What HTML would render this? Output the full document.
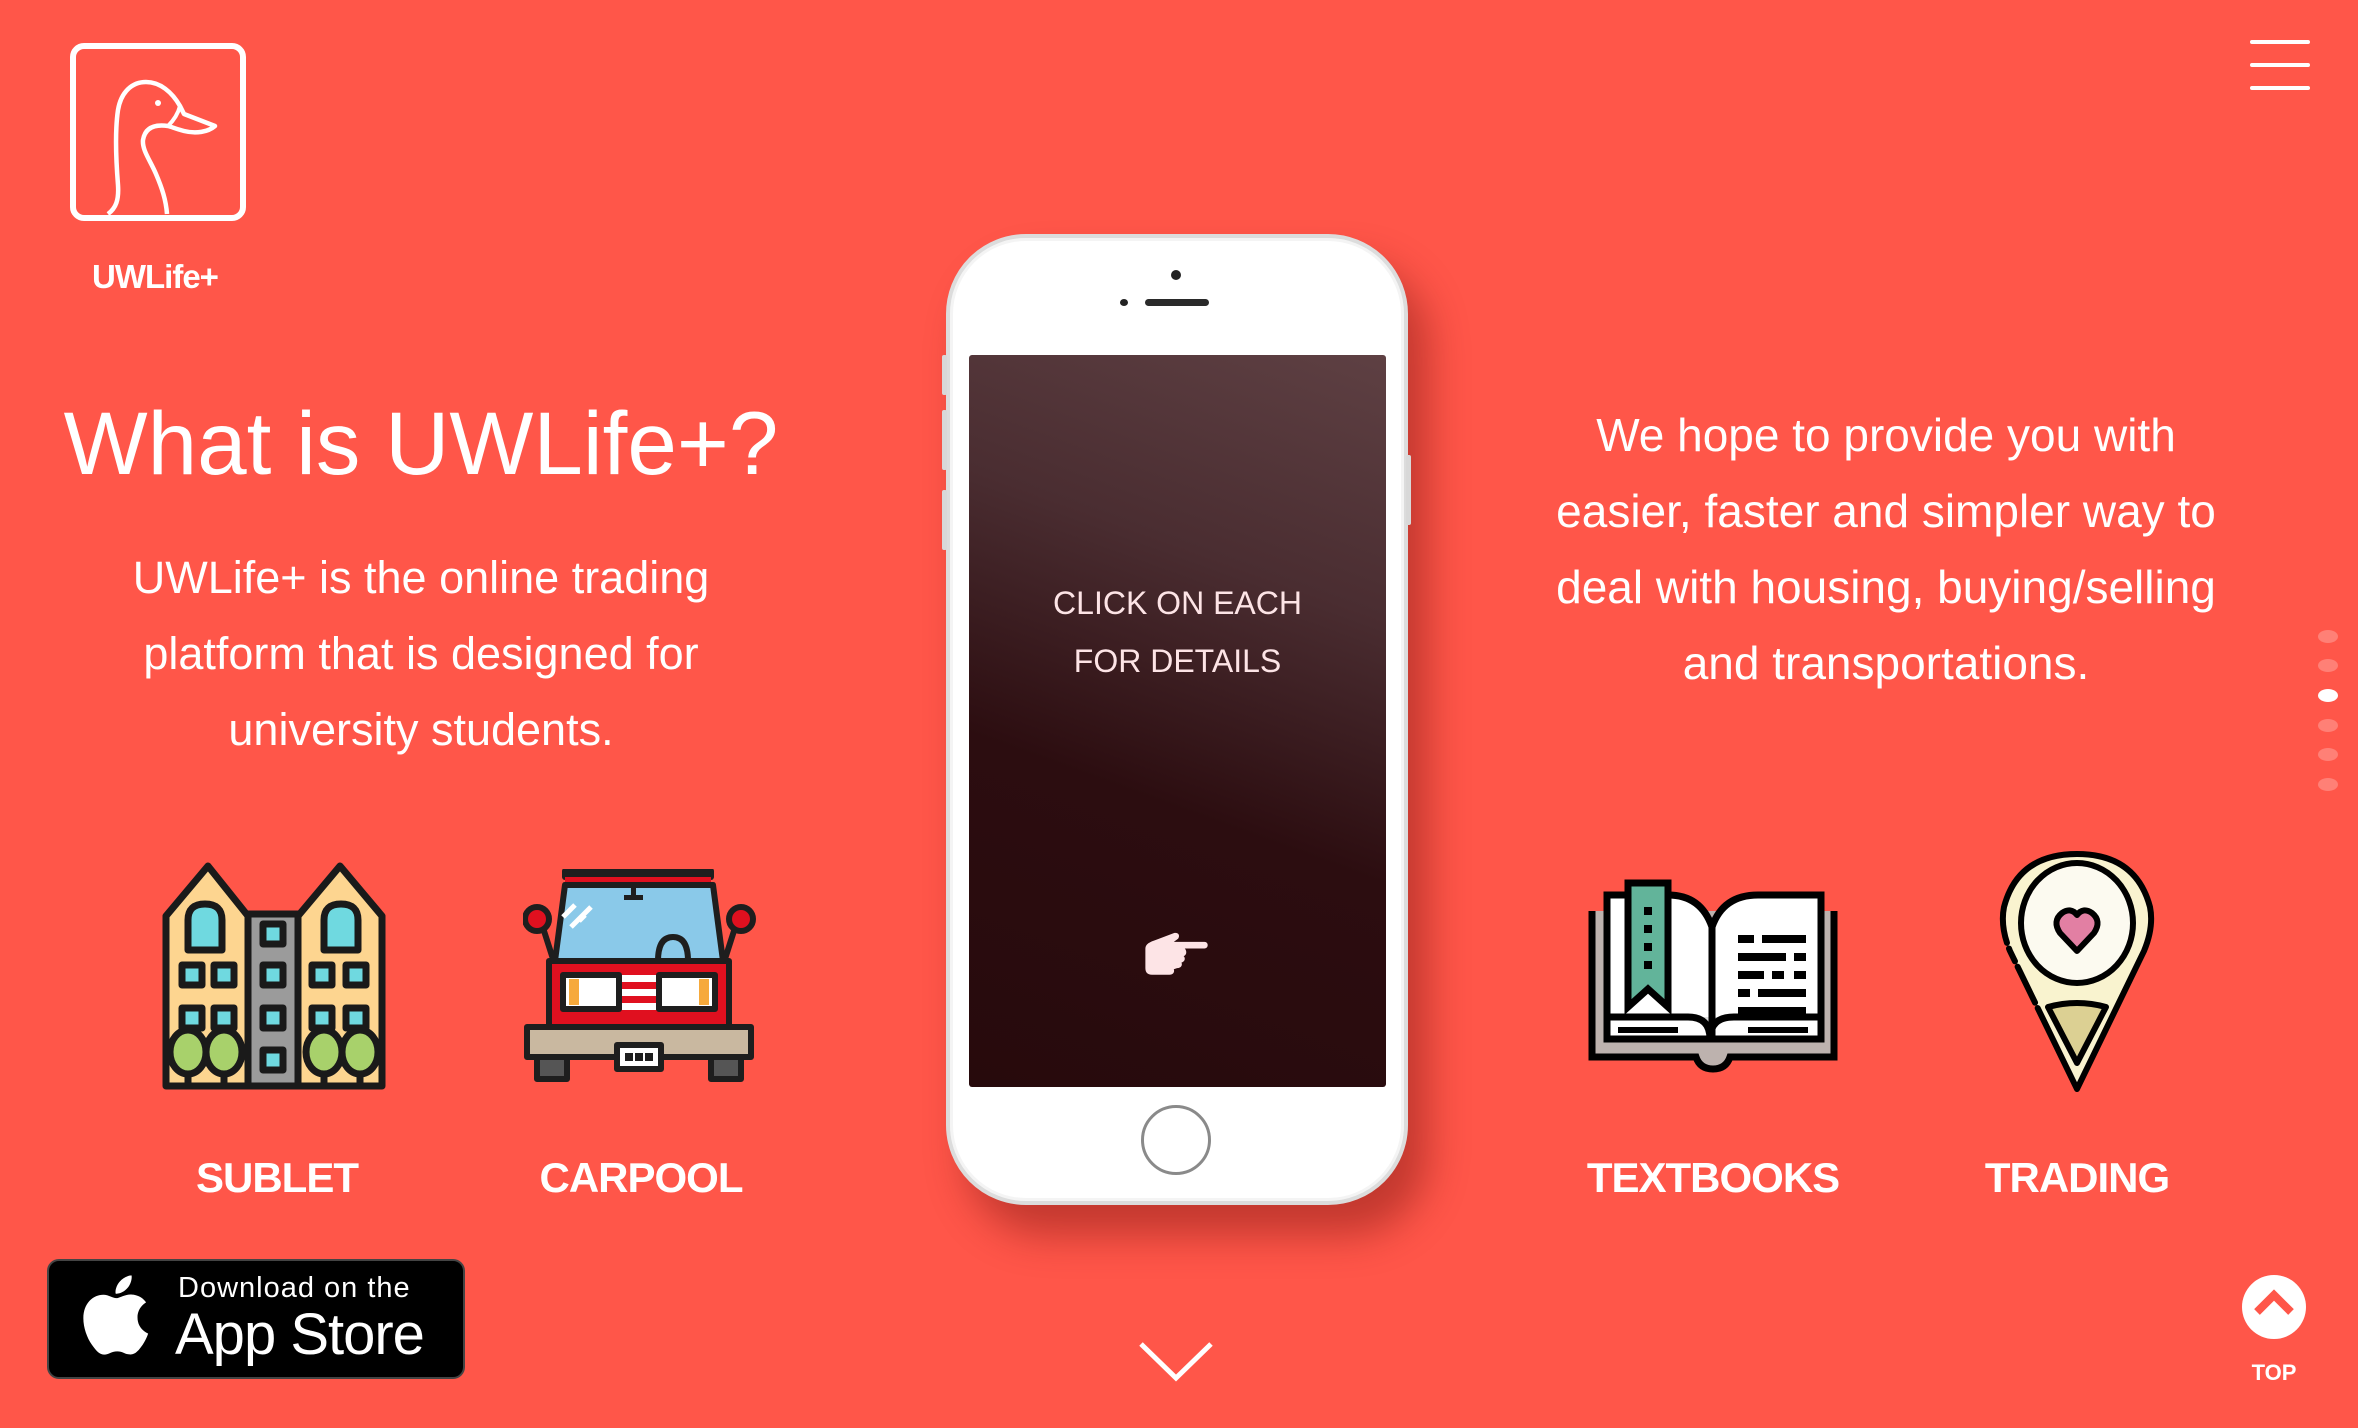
<!DOCTYPE html>
<html><head><meta charset="utf-8">
<style>
*{margin:0;padding:0;box-sizing:border-box}
html,body{width:2358px;height:1428px;overflow:hidden;background:#ff5649;font-family:"Liberation Sans",sans-serif;color:#fff}
.abs{position:absolute}
.c{text-align:center}
.p{font-size:44px;line-height:76px}
.lbl{font-size:42px;font-weight:bold;letter-spacing:-1px;line-height:50px;width:400px;text-align:center}
</style></head><body>

<!-- logo -->
<svg class="abs" style="left:68px;top:41px" width="180" height="182" viewBox="68 41 180 182">
<rect x="73" y="46" width="170" height="172" rx="11" fill="none" stroke="#fff" stroke-width="6"/>
<path d="M108 214 C116 208 119 200 118 185 C116 160 115 130 118 110 C121 92 132 82 146 82 C160 82 172 92 180 106 L184 114 L215 126 C208 132 196 134 184 131 C176 129 172 127 168 126 C154 124 145 128 143 140 C142 150 150 160 156 174 C162 188 166 200 167 214" fill="none" stroke="#fff" stroke-width="4.5" stroke-linejoin="round"/>
<path d="M180 106 C178 114 174 120 168 126" fill="none" stroke="#fff" stroke-width="4"/>
<circle cx="158" cy="103" r="3" fill="#fff"/>
</svg>
<div class="abs c" style="left:55px;top:258px;width:200px;font-size:33px;font-weight:bold;letter-spacing:-1px">UWLife+</div>

<!-- hamburger -->
<div class="abs" style="left:2250px;top:40px;width:60px;height:4px;background:#fff;border-radius:2px"></div>
<div class="abs" style="left:2250px;top:63px;width:60px;height:4px;background:#fff;border-radius:2px"></div>
<div class="abs" style="left:2250px;top:86px;width:60px;height:4px;background:#fff;border-radius:2px"></div>

<!-- left text -->
<div class="abs c" style="left:16px;top:393px;width:810px;font-size:89px;line-height:100px">What is UWLife+?</div>
<div class="abs c p" style="left:70px;top:540px;width:702px;font-size:45px">UWLife+ is the online trading<br>platform that is designed for<br>university students.</div>

<!-- right text -->
<div class="abs c p" style="left:1486px;top:397px;width:800px;font-size:46px">We hope to provide you with<br>easier, faster and simpler way to<br>deal with housing, buying/selling<br>and transportations.</div>

<!-- dots -->
<div class="abs" style="left:2318px;top:630px;width:20px;height:13px;border-radius:50%;background:rgba(255,255,255,.25)"></div>
<div class="abs" style="left:2318px;top:659px;width:20px;height:13px;border-radius:50%;background:rgba(255,255,255,.25)"></div>
<div class="abs" style="left:2318px;top:689px;width:20px;height:13px;border-radius:50%;background:#fff"></div>
<div class="abs" style="left:2318px;top:719px;width:20px;height:13px;border-radius:50%;background:rgba(255,255,255,.25)"></div>
<div class="abs" style="left:2318px;top:748px;width:20px;height:13px;border-radius:50%;background:rgba(255,255,255,.25)"></div>
<div class="abs" style="left:2318px;top:778px;width:20px;height:13px;border-radius:50%;background:rgba(255,255,255,.25)"></div>

<!-- phone -->
<div class="abs" style="left:946px;top:234px;width:462px;height:971px;border-radius:80px;background:#fff;border:4px solid #dcdcdc;box-shadow:20px 30px 40px rgba(120,20,15,.45),inset 0 0 0 3px #f4f4f4"></div>
<div class="abs" style="left:942px;top:355px;width:5px;height:40px;background:#d8d8d8;border-radius:2px"></div>
<div class="abs" style="left:942px;top:410px;width:5px;height:60px;background:#d8d8d8;border-radius:2px"></div>
<div class="abs" style="left:942px;top:490px;width:5px;height:60px;background:#d8d8d8;border-radius:2px"></div>
<div class="abs" style="left:1406px;top:455px;width:5px;height:70px;background:#d8d8d8;border-radius:2px"></div>
<div class="abs" style="left:1171px;top:270px;width:10px;height:10px;border-radius:50%;background:#222"></div>
<div class="abs" style="left:1120px;top:299px;width:8px;height:7px;border-radius:50%;background:#222"></div>
<div class="abs" style="left:1145px;top:299px;width:64px;height:7px;border-radius:4px;background:#2a2a2a"></div>
<div class="abs" style="left:969px;top:355px;width:417px;height:732px;border-radius:3px;background:linear-gradient(200deg,#5e4043 0%,#4a2d31 30%,#2c0d10 60%,#270a0c 100%)"></div>
<div class="abs c" style="left:969px;top:574px;width:417px;font-size:32px;line-height:58px;color:#fde4e6">CLICK ON EACH<br>FOR DETAILS</div>
<svg class="abs" style="left:1141px;top:928px" width="70" height="54" viewBox="0 0 64 48">
<path d="M4 18 C4 14 8 12 14 10 L30 4 C34 3 36 6 34 9 L30 12 L58 12 C62 12 62 18 58 18 L40 18 C42 20 42 24 39 25 C41 27 40 30 37 31 C38 33 37 36 33 36 L30 37 C31 40 29 42 26 42 L10 42 C6 42 4 40 4 36 Z" fill="#fde4e6"/>
</svg>
<div class="abs" style="left:1141px;top:1105px;width:70px;height:70px;border-radius:50%;border:3px solid #8a8a8a;background:#fff"></div>

<!-- building -->
<svg class="abs" style="left:160px;top:860px" width="230" height="232" viewBox="0 0 230 232">
<g stroke="#1a1a1a" stroke-width="7" stroke-linejoin="round" stroke-linecap="round">
<path d="M6 56 L48 6 L88 56 L88 226 L6 226 Z" fill="#fdd590"/>
<path d="M88 54 L138 54 L138 226 L88 226 Z" fill="#9b9b9b"/>
<path d="M138 56 L180 6 L222 56 L222 226 L138 226 Z" fill="#fdd590"/>
<path d="M28 90 L28 60 Q28 44 45 44 Q62 44 62 60 L62 90 Z" fill="#6fd9e0"/>
<path d="M164 90 L164 60 Q164 44 181 44 Q198 44 198 60 L198 90 Z" fill="#6fd9e0"/>
<rect x="22" y="105" width="20" height="20" fill="#6fd9e0"/><rect x="54" y="105" width="20" height="20" fill="#6fd9e0"/>
<rect x="22" y="148" width="20" height="20" fill="#6fd9e0" /><rect x="54" y="148" width="20" height="20" fill="#6fd9e0"/>
<rect x="152" y="105" width="20" height="20" fill="#6fd9e0"/><rect x="186" y="105" width="20" height="20" fill="#6fd9e0"/>
<rect x="152" y="148" width="20" height="20" fill="#6fd9e0"/><rect x="186" y="148" width="20" height="20" fill="#6fd9e0"/>
<rect x="103" y="64" width="20" height="20" fill="#6fd9e0"/><rect x="103" y="105" width="20" height="20" fill="#6fd9e0"/>
<rect x="103" y="148" width="20" height="20" fill="#6fd9e0"/><rect x="103" y="190" width="20" height="20" fill="#6fd9e0"/>
<path d="M28 212 L28 226 M64 212 L64 226 M164 212 L164 226 M200 212 L200 226" fill="none"/>
<ellipse cx="28" cy="192" rx="18" ry="22" fill="#a8d16b"/><ellipse cx="64" cy="192" rx="18" ry="22" fill="#a8d16b"/>
<ellipse cx="164" cy="192" rx="18" ry="22" fill="#a8d16b"/><ellipse cx="200" cy="192" rx="18" ry="22" fill="#a8d16b"/>
</g></svg>

<!-- car -->
<svg class="abs" style="left:523px;top:869px" width="234" height="213" viewBox="0 0 234 213">
<g stroke="#1e1e1e" stroke-width="6" stroke-linejoin="round">
<rect x="42" y="2" width="146" height="6" fill="#1e1e1e"/>
<rect x="42" y="8" width="146" height="6" fill="#e0101f" stroke="none"/>
<path d="M42 16 L190 16 L200 92 L32 92 Z" fill="#8ac9e9"/>
<path d="M14 40 L30 90 M218 40 L202 90" fill="none"/>
<circle cx="14" cy="50" r="12" fill="#e0101f"/><circle cx="218" cy="50" r="12" fill="#e0101f"/>
<path d="M135 92 Q135 68 150 68 Q165 68 165 92" fill="none"/>
<rect x="26" y="92" width="180" height="72" fill="#e0101f"/>
<rect x="40" y="106" width="56" height="34" fill="#fff"/><rect x="136" y="106" width="56" height="34" fill="#fff"/>
<rect x="4" y="158" width="224" height="30" fill="#c9b8a0"/>
<rect x="14" y="188" width="30" height="22" fill="#555"/><rect x="188" y="188" width="30" height="22" fill="#555"/>
<rect x="94" y="176" width="44" height="24" fill="#fff"/>
</g>
<rect x="46" y="110" width="10" height="26" fill="#f6a93b"/><rect x="176" y="110" width="10" height="26" fill="#f6a93b"/>
<rect x="99" y="106" width="34" height="7" fill="#fff"/><rect x="99" y="120" width="34" height="7" fill="#fff"/><rect x="99" y="134" width="34" height="7" fill="#fff"/>
<rect x="102" y="184" width="8" height="8" fill="#1e1e1e"/><rect x="112" y="184" width="8" height="8" fill="#1e1e1e"/><rect x="122" y="184" width="8" height="8" fill="#1e1e1e"/>
<path d="M40 48 L52 36 M48 58 L68 38 M56 52 L62 46" stroke="#fff" stroke-width="5"/>
<rect x="108" y="16" width="5" height="12" fill="#1e1e1e"/><rect x="101" y="26" width="19" height="5" fill="#1e1e1e"/>
</svg>

<!-- book -->
<svg class="abs" style="left:1588px;top:877px" width="252" height="196" viewBox="0 0 252 196">
<g stroke="#000" stroke-width="7" stroke-linejoin="miter">
<path d="M4 34 L4 180 L108 180 Q112 192 125 192 Q138 192 142 180 L246 180 L246 34" fill="#bdb2ae"/>
<path d="M19 18 L19 162 L233 162 L233 18 L170 18 Q135 18 124 50 Q113 18 80 18 Z" fill="#fff"/>
<path d="M19 140 L100 140 Q122 140 122 162 Q122 140 146 140 L233 140" fill="#dedede"/>
<path d="M124 50 L124 160" fill="none"/>
<path d="M40 6 L80 6 L80 130 L60 112 L40 130 Z" fill="#62b49a"/>
</g>
<g fill="#000"><rect x="150" y="58" width="16" height="8"/><rect x="174" y="58" width="44" height="8"/><rect x="150" y="76" width="48" height="8"/><rect x="206" y="76" width="12" height="8"/>
<rect x="150" y="94" width="26" height="8"/><rect x="184" y="94" width="12" height="8"/><rect x="206" y="94" width="12" height="8"/>
<rect x="150" y="112" width="12" height="8"/><rect x="170" y="112" width="48" height="8"/><rect x="150" y="130" width="68" height="8"/>
<rect x="56" y="30" width="8" height="8"/><rect x="56" y="48" width="8" height="8"/><rect x="56" y="66" width="8" height="8"/><rect x="56" y="84" width="8" height="8"/></g>
<rect x="30" y="150" width="60" height="6" fill="#000"/><rect x="160" y="150" width="60" height="6" fill="#000"/>
</svg>

<!-- pin -->
<svg class="abs" style="left:1998px;top:849px" width="158" height="246" viewBox="0 0 158 246">
<g stroke="#000" stroke-width="6" stroke-linecap="round" stroke-linejoin="round">
<path d="M79 240 L12 102 Q2 78 6 58 Q20 5 79 5 Q138 5 152 58 Q156 78 146 102 Z" fill="#f9f3cf" stroke-dasharray="90 6 40 6 14 6 500"/>
<ellipse cx="79" cy="74" rx="56" ry="60" fill="#fcfaf0"/>
<path d="M79 102 L62 84 Q54 72 64 64 Q73 58 79 66 Q85 58 94 64 Q104 72 96 84 Z" fill="#e27fa3"/>
<path d="M50 158 Q79 150 108 158 L79 214 Z" fill="#dcd093"/>
</g></svg>

<div class="abs lbl" style="left:77px;top:1153px">SUBLET</div>
<div class="abs lbl" style="left:441px;top:1153px">CARPOOL</div>
<div class="abs lbl" style="left:1513px;top:1153px">TEXTBOOKS</div>
<div class="abs lbl" style="left:1877px;top:1153px">TRADING</div>

<!-- app store -->
<div class="abs" style="left:47px;top:1259px;width:418px;height:120px;border-radius:12px;background:#000;border:2px solid #444"></div>
<svg class="abs" style="left:80px;top:1272px" width="72" height="86" viewBox="2 0.5 20 23"><path fill="#fff" d="M16.365 1.43c0 1.14-.493 2.27-1.177 3.08-.744.9-1.99 1.570-2.987 1.570-.12 0-.23-.02-.3-.03-.01-.06-.04-.22-.04-.39 0-1.150.572-2.270 1.206-2.980.804-.94 2.142-1.640 3.248-1.680.03.130.05.280.05.430zm4.565 15.710c-.03.070-.463 1.580-1.518 3.120-.945 1.340-1.940 2.710-3.430 2.710-1.517 0-1.900-.880-3.630-.880-1.698 0-2.302.910-3.670.910-1.377 0-2.332-1.260-3.428-2.800-1.287-1.820-2.323-4.630-2.323-7.280 0-4.280 2.797-6.550 5.552-6.550 1.448 0 2.675.950 3.600.950.865 0 2.222-1.010 3.902-1.010.613 0 2.886.060 4.374 2.190-.130.090-2.383 1.370-2.383 4.190 0 3.260 2.854 4.420 2.955 4.450z"/></svg>
<div class="abs" style="left:178px;top:1271px;font-size:29px;line-height:34px;letter-spacing:1px;white-space:nowrap">Download on the</div>
<div class="abs" style="left:175px;top:1302px;font-size:58px;line-height:66px;letter-spacing:-1px;white-space:nowrap">App Store</div>

<!-- down chevron -->
<svg class="abs" style="left:1138px;top:1340px" width="76" height="44" viewBox="0 0 76 44"><path d="M3 4 L38 38 L73 4" fill="none" stroke="#fff" stroke-width="5"/></svg>

<!-- top -->
<div class="abs" style="left:2242px;top:1275px;width:64px;height:64px;border-radius:50%;background:#fff"></div>
<svg class="abs" style="left:2242px;top:1275px" width="64" height="64" viewBox="0 0 64 64"><path d="M15 37 L32 20 L49 37" fill="none" stroke="#ff5649" stroke-width="8"/></svg>
<div class="abs c" style="left:2224px;top:1360px;width:100px;font-size:22px;font-weight:bold">TOP</div>

</body></html>
